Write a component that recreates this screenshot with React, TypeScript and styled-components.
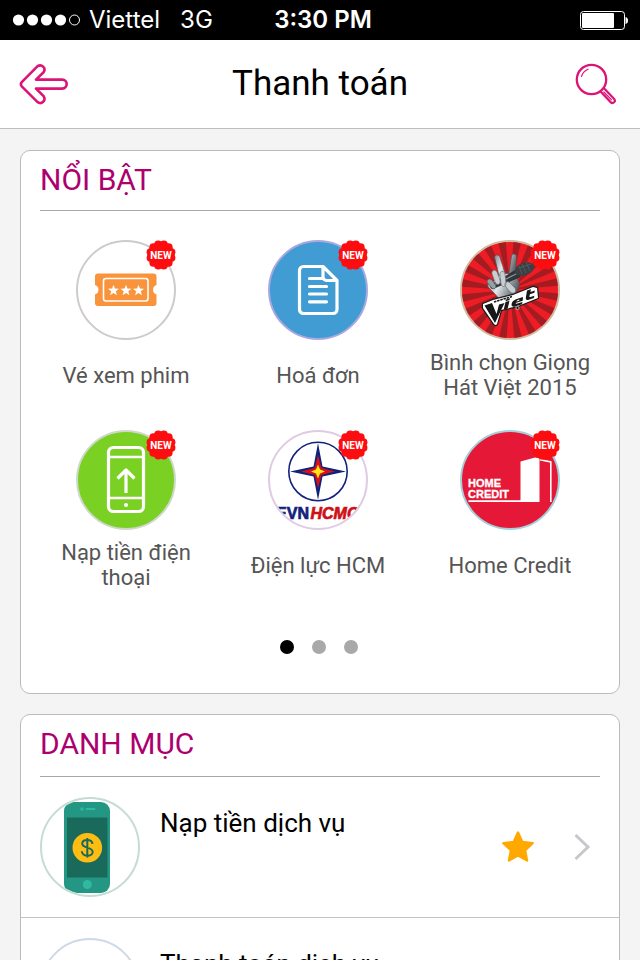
import React from "react";
import styled, { createGlobalStyle } from "styled-components";

const GlobalStyle = createGlobalStyle`
  *, *::before, *::after { box-sizing: border-box; }
  body { margin: 0; background: #f4f4f4; font-family: Roboto, "Noto Sans", sans-serif; color: #000; }
  button { font: inherit; color: inherit; border: 0; background: none; padding: 0; cursor: pointer; }
  svg { display: block; }
`;

const Screen = styled.div`
  display: flex;
  flex-direction: column;
  height: 100vh;
`;

const StatusBar = styled.div`
  flex: none;
  display: grid;
  grid-template-columns: 1fr auto 1fr;
  align-items: center;
  height: 40px;
  padding: 0 12px;
  background: #000;
  color: #fff;
  font-family: Inter, sans-serif;
  font-size: 24px;
  line-height: 40px;
`;

const Carrier = styled.div`
  display: flex;
  align-items: center;
  gap: 8px;
`;

const Network = styled.span`
  margin-left: 12px;
`;

const Clock = styled.time`
  padding-left: 6px;
  font-weight: 600;
`;

const BatterySlot = styled.div`
  justify-self: end;
`;

const NavBar = styled.header`
  flex: none;
  display: grid;
  grid-template-columns: 50px 1fr 50px;
  align-items: center;
  height: 89px;
  padding: 0 19px;
  background: #fff;
  border-bottom: 1px solid #bdbdbd;
`;

const NavTitle = styled.h1`
  margin: 0;
  text-align: center;
  font-size: 35px;
  line-height: 40px;
  font-weight: 400;
`;

const IconButton = styled.button`
  display: grid;
  place-items: center;
  height: 50px;
`;

const Content = styled.main`
  flex: 1;
  min-height: 0;
  overflow-y: auto;
  scrollbar-width: none;
  display: flex;
  flex-direction: column;
  gap: 20px;
  padding: 21px 20px 20px;
`;

const Card = styled.section`
  flex: none;
  overflow: hidden;
  background: #fff;
  border: 1px solid #bbb;
  border-radius: 10px;
`;

const CardTitle = styled.h2<{ $roomy?: boolean }>`
  margin: 0 19px;
  padding: 9px 0 ${(p) => (p.$roomy ? 12 : 10)}px;
  border-bottom: 1px solid #a8a8a8;
  color: #ac006f;
  font-size: 30px;
  line-height: 40px;
  font-weight: 400;
`;

const ServiceGrid = styled.div`
  display: grid;
  grid-template-columns: repeat(3, 1fr);
  row-gap: 30px;
  padding: 29px 13px 0 9px;
`;

const ServiceTile = styled.button`
  display: flex;
  flex-direction: column;
  align-items: center;
  gap: 10px;
`;

const TileLabel = styled.span`
  display: flex;
  align-items: center;
  justify-content: center;
  min-height: 50px;
  padding: 0 14px;
  color: #555;
  font-size: 22px;
  line-height: 25px;
`;

const Medallion = styled.span`
  position: relative;
  width: 100px;
  height: 100px;
`;

const Disc = styled.span<{ $ring: string; $fill?: string }>`
  display: block;
  width: 100px;
  height: 100px;
  overflow: hidden;
  border: 2px solid ${(p) => p.$ring};
  border-radius: 50%;
  background: ${(p) => p.$fill ?? "#fff"};
`;

const BadgeSlot = styled.span`
  position: absolute;
  top: 0;
  right: 0;
`;

const Pager = styled.div`
  display: flex;
  justify-content: center;
  gap: 18px;
  padding: 50px 2px 39px 0;
`;

const PageDot = styled.button<{ $active?: boolean }>`
  width: 14px;
  height: 14px;
  border-radius: 50%;
  background: ${(p) => (p.$active ? "#000" : "#a9a9a9")};
`;

const CategoryList = styled.ul`
  margin: 0;
  padding: 0;
  list-style: none;
`;

const CategoryRow = styled.li`
  display: flex;
  padding: 20px 28px 20px 19px;
  border-bottom: 1px solid #c4c4c4;
`;

const CategoryName = styled.a`
  flex: 1;
  padding: 6px 0 0 20px;
  color: #000;
  text-decoration: none;
  font-size: 26px;
  line-height: 40px;
`;

const RowActions = styled.div`
  display: flex;
  align-items: center;
  gap: 38px;
`;

const SignalDots = () => (
  <svg width="69" height="14" viewBox="0 0 69 14" fill="#fff" role="img" aria-label="Signal">
    {[6.5, 20.5, 34.5, 48.5].map((x) => (
      <circle key={x} cx={x} cy="7" r="5.6" />
    ))}
    <circle cx="62.5" cy="7" r="5" fill="none" stroke="#fff" />
  </svg>
);

const Battery = () => (
  <svg width="49" height="20" viewBox="0 0 49 20" role="img" aria-label="Battery">
    <rect x="1.5" y="1.5" width="44" height="18" rx="3" fill="none" stroke="#fff" />
    <rect x="3" y="3" width="32" height="15" rx="1" fill="#fff" />
    <path d="M46.500 7q2.500 .5 2.500 3.500t-2.500 3.500z" fill="#fff" />
  </svg>
);

const BackArrow = () => (
  <svg width="50" height="42" viewBox="0 0 50 42" fill="none" stroke="#dc1478" strokeWidth="2.600" strokeLinejoin="round">
    <path d="M3 18.800 18.600 3.200C22.600.6 27.400 5 24.600 9.200L17 16.600h26.200c6 .2 6 8.800 0 9H17l7.600 7.600c2.800 4.200-2 8.600-6 6L3 23.600c-1.600-1.800-1.600-3.200 0-4.800z" />
  </svg>
);

const SearchIcon = () => (
  <svg width="42" height="42" viewBox="0 0 42 42" fill="none" stroke="#dc1478" strokeLinecap="round">
    <circle cx="16.500" cy="16.500" r="14.700" strokeWidth="2.300" />
    <path d="M6.500 13.500q1.500-5 6.500-7.200" strokeWidth="1.200" />
    <path d="m29.200 25.500 9.800 10.200c2.400 2.800-1 5.600-3.400 3.400L25.800 28.800" strokeWidth="2.200" />
    <path d="m28.800 29 7.600 7.700" strokeWidth="1.200" />
  </svg>
);

const lobes = Array.from({ length: 12 }, (_, i) => {
  const a = ((i + 0.5) * Math.PI) / 6;
  return { x: 15 + 10.8 * Math.cos(a), y: 15 + 10.8 * Math.sin(a) };
});

const NewBadge = () => (
  <svg width="30" height="30" viewBox="0 0 30 30" fill="#fd0d10">
    <circle cx="15" cy="15" r="13" />
    {lobes.map((l, i) => (
      <circle key={i} cx={l.x} cy={l.y} r="4" />
    ))}
    <text x="15" y="19" textAnchor="middle" fill="#fff" fontFamily="Roboto, sans-serif" fontSize="10" fontWeight="700">
      NEW
    </text>
  </svg>
);

const starPath = (cx: number, cy: number, r: number, ratio = 0.42) =>
  Array.from({ length: 10 }, (_, i) => {
    const a = -Math.PI / 2 + (i * Math.PI) / 5;
    const d = i % 2 ? r * ratio : r;
    return `${i ? "L" : "M"}${(cx + d * Math.cos(a)).toFixed(2)} ${(cy + d * Math.sin(a)).toFixed(2)}`;
  }).join("") + "z";

/* Service art is drawn in a 96 unit box, the inner area of a disc. */
const Art = ({ children }: { children: React.ReactNode }) => (
  <svg width="96" height="96" viewBox="2 2 96 96" aria-hidden="true">
    {children}
  </svg>
);

const TicketArt = () => (
  <Art>
    <path
      d="M22 33.500h55.500a3 3 0 0 1 3 3V45a5 5 0 0 0 0 9.500V63a3 3 0 0 1-3 3H22a3 3 0 0 1-3-3v-8.500a5 5 0 0 0 0-9.500v-8.500a3 3 0 0 1 3-3z"
      fill="#f9933c"
    />
    <rect x="27.500" y="38.500" width="44.500" height="22.500" rx="2.500" fill="none" stroke="#fff" strokeWidth="1.600" />
    <path d={[37.5, 50, 62.5].map((x) => starPath(x, 50.5, 5.8)).join("")} fill="#fff" />
  </Art>
);

const BillArt = () => (
  <Art>
    <g fill="none" stroke="#fff" strokeWidth="3.200" strokeLinecap="round" strokeLinejoin="round">
      <path d="M55 26.500H35.500a4 4 0 0 0-4 4v39a4 4 0 0 0 4 4h29.500a4 4 0 0 0 4-4V40.500zV37a3.500 3.500 0 0 0 3.500 3.500H69" />
      <path d="M41.500 38.500H55M41.500 46.500h17M41.500 54h17M41.500 61.800h17" />
    </g>
  </Art>
);

const rays = Array.from({ length: 20 }, (_, i) => {
  const a = ((i * 18 + 4) * Math.PI) / 180;
  const b = a + Math.PI / 20;
  return `M50 50L${50 + 60 * Math.cos(a)} ${50 + 60 * Math.sin(a)}L${50 + 60 * Math.cos(b)} ${50 + 60 * Math.sin(b)}z`;
}).join("");

const VoiceArt = () => (
  <Art>
    <defs>
      <linearGradient id="hand" x1="0" y1="0" x2="1" y2="0.4">
        <stop offset="0" stopColor="#7e858b" />
        <stop offset="0.450" stopColor="#e4e8eb" />
        <stop offset="0.700" stopColor="#a0a7ad" />
        <stop offset="1" stopColor="#596066" />
      </linearGradient>
    </defs>
    <path d={rays} fill="#a31c22" />
    <path d="M34.500 17c1-3 5-2.500 5.500.5L46 36l-6 4zM51.500 16c.5-3 5-2.500 5 .5L55 38l-7 1z" fill="url(#hand)" stroke="#4b5157" strokeWidth=".7" />
    <path d="M33 42c4-7 10-10 17-8l7 4c3 4 3 9 0 13l-3 8-13 2-6-7-7-7c-1-3 1-5 5-5z" fill="url(#hand)" stroke="#4b5157" strokeWidth=".7" />
    <path d="M31 44.500 57 29l4 8-28 12q-4 0-2-4.500z" fill="#30353a" />
    <path d="m33 45.500 25-12.500" stroke="#8a9197" strokeWidth="1.200" />
    <ellipse cx="64.500" cy="29" rx="10" ry="6.300" transform="rotate(-20 64.500 29)" fill="#3a4044" />
    <path d="m59 26 3 8m0-10 4 9m0-11 4 9m-11-3 12-4" stroke="#5b6369" strokeWidth=".7" />
    <path d="M32 34c-1-4 3-5 5-2l3 8c1 5-3 6-5 2zM40 35c-1-4 4-5 5-1l1 9c0 4-4 5-5 1zM46 47c-3-4 1-7 4-4l5 5c2 4-1 7-5 4z" fill="#c9ced2" stroke="#6a7177" strokeWidth=".7" />
    <path d="M27 42c0-3 3-4 5-2l4 6c0 3-3 4-5 1z" fill="#989fa5" stroke="#52585e" strokeWidth=".7" />
    <g stroke="#17191a" strokeWidth="2.400" strokeLinejoin="round">
      <path d="m23 64 10-4 20-5 20-8 4 1 1 10-20 8-17 4-4 14q-1 2-3 0L23 68z" fill="#fff" />
    </g>
    <path d="m23 64 10-4 20-5 20-8 4 1 1 10-20 8-17 4-4 14q-1 2-3 0L23 68z" fill="#fff" />
    <g fill="#181818">
      <path d="m24.500 65.500 7.500-2.500 4.500 11 2.500-9.500 5.500-1.500-9.500 20z" />
      <path d="m45.500 62 4-1.200-1.800 7.700-4 1.200zM46 59.500l4-1.200-.5 1.700-4 1.200z" />
      <path d="m63 57-7 2.200q-4 1.500-4.500 5-.3 3.200 3.500 2.300l7-2.200.5-2.300-6 1.700q-1 .2-.8-.7l7-2.200zm-3.500 2.600-.3 1.100-3 .9q.6-1.300 3.300-2zM67 50.500l4-1.300-.6 2.700 4.500-1.500-.5 2.400-4.500 1.500-.5 2.200q0 .8 1 .5l4-1.200-.6 2.300-5 1.600q-3.500.8-3-2z" />
      <circle cx="57.500" cy="68" r="1.600" stroke="#fff" strokeWidth=".6" />
      <path d="m34 62 18-5.500" stroke="#181818" strokeWidth="1.600" strokeDasharray="2.500 .8" />
    </g>
  </Art>
);

const TopUpArt = () => (
  <Art>
    <g fill="none" stroke="#fff" strokeWidth="3.200" strokeLinejoin="round">
      <rect x="32.500" y="17.500" width="35" height="64" rx="5" />
      <path d="M33 27h34M33 68h34" strokeWidth="2.600" />
      <path d="M50 63V40M41.500 48.500 50 40l8.500 8.500" />
    </g>
    <circle cx="50" cy="75" r="2" fill="#fff" />
  </Art>
);

const PowerArt = () => (
  <Art>
    <circle cx="50" cy="41.500" r="29.200" fill="#fff" stroke="#12217c" strokeWidth="1.600" />
    <path d="M50 13l4.500 23.500L78 41.500l-23.500 5L50 70l-4.500-23.500-23.500-5 23.500-5z" fill="#12217c" />
    <path d="M50 25l3.500 13L67 41.500l-13.500 3.500L50 58l-3.500-13L33 41.500 46.500 38z" fill="#d51219" />
    <path d="M50 34.500l2 5 5 2-5 2-2 5-2-5-5-2 5-2z" fill="#ffe713" />
    <g fontFamily="Liberation Sans, sans-serif" fontSize="16" fontWeight="700" strokeWidth=".7">
      <text x="41" y="89" textAnchor="end" fill="#12217c" stroke="#12217c">EVN</text>
      <text x="42.500" y="89" fill="#cf1017" stroke="#cf1017" fontStyle="italic">HCMC</text>
    </g>
  </Art>
);

const HomeCreditArt = () => (
  <Art>
    <path d="M8.500 70.200h52V31.500L75 27.500l4.500 1v43.500h-71z" fill="#fff" />
    <path d="M80 29.800 90.800 32v40" fill="none" stroke="#fff" strokeWidth="1.600" />
    <g fontFamily="Liberation Sans, sans-serif" fontSize="11" fontWeight="700" fill="#fff" stroke="#fff" strokeWidth=".3">
      <text x="8" y="57">HOME</text>
      <text x="8" y="67.500">CREDIT</text>
    </g>
  </Art>
);

const PhoneCashArt = () => (
  <Art>
    <rect x="24" y="5" width="46" height="91" rx="9" fill="#249784" />
    <rect x="27" y="20.500" width="40.500" height="60" fill="#1a6a5b" />
    <circle cx="42" cy="12" r="1.700" fill="#2fb9a2" />
    <path d="M46.500 12h8" stroke="#2fb9a2" strokeWidth="1.800" strokeLinecap="round" />
    <circle cx="47.300" cy="87.500" r="4.500" fill="#2fb9a2" />
    <circle cx="47.300" cy="50.700" r="14.800" fill="#fdbd12" />
    <path
      d="M47.300 41v19.500M52.500 46.800c-.5-5-10-5-10.300-.3-.2 5 10.500 3.200 10.500 8.500-.2 5-10.500 5-10.900-.7"
      fill="none"
      stroke="#1a6a5b"
      strokeWidth="2"
    />
  </Art>
);

const StarIcon = () => (
  <svg width="34" height="34" viewBox="0 0 34 34" fill="#ffa800" stroke="#ffa800" strokeWidth="2.400" strokeLinejoin="round">
    <path d={starPath(17, 18, 15.4, 0.48)} />
  </svg>
);

const Chevron = () => (
  <svg width="18" height="28" viewBox="0 0 18 28" fill="none" stroke="#c7c7cc" strokeWidth="3">
    <path d="M2.500 2 15 14 2.500 26" />
  </svg>
);

const services = [
  { label: "Vé xem phim", ring: "#cfcbcc", fill: "#fff", art: <TicketArt /> },
  { label: "Hoá đơn", ring: "#a9a9e0", fill: "#409cd2", art: <BillArt /> },
  { label: "Bình chọn Giọng Hát Việt 2015", ring: "#cdbda4", fill: "#ee1c25", art: <VoiceArt /> },
  { label: "Nạp tiền điện thoại", ring: "#cfd8cb", fill: "#7bd123", art: <TopUpArt /> },
  { label: "Điện lực HCM", ring: "#dfcbe4", fill: "#fff", art: <PowerArt /> },
  { label: "Home Credit", ring: "#a5cfdb", fill: "#e51937", art: <HomeCreditArt /> },
];

const categories = [
  { name: "Nạp tiền dịch vụ", ring: "#c5dbd3", art: <PhoneCashArt /> },
  { name: "Thanh toán dịch vụ", ring: "#ced9e8", art: null },
];

export default function App() {
  return (
    <Screen>
      <GlobalStyle />
      <StatusBar>
        <Carrier>
          <SignalDots />
          <span>Viettel</span>
          <Network>3G</Network>
        </Carrier>
        <Clock>3:30 PM</Clock>
        <BatterySlot>
          <Battery />
        </BatterySlot>
      </StatusBar>
      <NavBar>
        <IconButton type="button" aria-label="Quay lại">
          <BackArrow />
        </IconButton>
        <NavTitle>Thanh toán</NavTitle>
        <IconButton type="button" aria-label="Tìm kiếm">
          <SearchIcon />
        </IconButton>
      </NavBar>
      <Content>
        <Card>
          <CardTitle>NỔI BẬT</CardTitle>
          <ServiceGrid>
            {services.map((s) => (
              <ServiceTile key={s.label} type="button">
                <Medallion>
                  <Disc $ring={s.ring} $fill={s.fill}>
                    {s.art}
                  </Disc>
                  <BadgeSlot>
                    <NewBadge />
                  </BadgeSlot>
                </Medallion>
                <TileLabel>{s.label}</TileLabel>
              </ServiceTile>
            ))}
          </ServiceGrid>
          <Pager>
            {[1, 2, 3].map((n) => (
              <PageDot key={n} type="button" $active={n === 1} aria-label={`Trang ${n}`} />
            ))}
          </Pager>
        </Card>
        <Card>
          <CardTitle $roomy>DANH MỤC</CardTitle>
          <CategoryList>
            {categories.map((c) => (
              <CategoryRow key={c.name}>
                <Disc $ring={c.ring}>{c.art}</Disc>
                <CategoryName href="#">{c.name}</CategoryName>
                <RowActions>
                  <IconButton type="button" aria-label="Yêu thích">
                    <StarIcon />
                  </IconButton>
                  <Chevron />
                </RowActions>
              </CategoryRow>
            ))}
          </CategoryList>
        </Card>
      </Content>
    </Screen>
  );
}
